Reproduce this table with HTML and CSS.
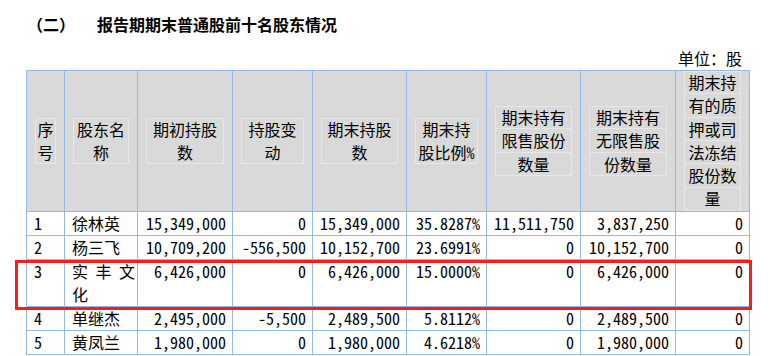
FILE: index.html
```html
<!DOCTYPE html>
<html lang="zh-CN">
<head>
<meta charset="utf-8">
<title>报告期期末普通股前十名股东情况</title>
<link rel="stylesheet" href="styles.css">
</head>
<body>
<div class="page">
  <h2 class="title"><span class="sec">（二）</span>报告期期末普通股前十名股东情况</h2>
  <div class="unit">单位：股</div>
  <table class="holders">
    <colgroup>
      <col class="w38"><col class="w73"><col class="w95"><col class="w80"><col class="w94"><col class="w80"><col class="w94"><col class="w95"><col class="w74">
    </colgroup>
    <thead>
      <tr>
        <th><div class="hb">序号</div></th>
        <th><div class="hb">股东名称</div></th>
        <th><div class="hb">期初持股数</div></th>
        <th><div class="hb">持股变动</div></th>
        <th><div class="hb">期末持股数</div></th>
        <th><div class="hb">期末持股比例%</div></th>
        <th><div class="hb lined">期末持有限售股份数量</div></th>
        <th><div class="hb lined">期末持有无限售股份数量</div></th>
        <th><div class="hb lined">期末持有的质押或司法冻结股份数量</div></th>
      </tr>
    </thead>
    <tbody>
      <tr>
        <td class="n l">1</td><td class="name">徐林英</td><td class="n">15,349,000</td><td class="n">0</td><td class="n">15,349,000</td><td class="n">35.8287%</td><td class="n">11,511,750</td><td class="n">3,837,250</td><td class="n">0</td>
      </tr>
      <tr>
        <td class="n l">2</td><td class="name">杨三飞</td><td class="n">10,709,200</td><td class="n">-556,500</td><td class="n">10,152,700</td><td class="n">23.6991%</td><td class="n">0</td><td class="n">10,152,700</td><td class="n">0</td>
      </tr>
      <tr>
        <td class="n l">3</td><td class="name just">实丰文化</td><td class="n">6,426,000</td><td class="n">0</td><td class="n">6,426,000</td><td class="n">15.0000%</td><td class="n">0</td><td class="n">6,426,000</td><td class="n">0</td>
      </tr>
      <tr>
        <td class="n l">4</td><td class="name">单继杰</td><td class="n">2,495,000</td><td class="n">-5,500</td><td class="n">2,489,500</td><td class="n">5.8112%</td><td class="n">0</td><td class="n">2,489,500</td><td class="n">0</td>
      </tr>
      <tr>
        <td class="n l">5</td><td class="name">黄凤兰</td><td class="n">1,980,000</td><td class="n">0</td><td class="n">1,980,000</td><td class="n">4.6218%</td><td class="n">0</td><td class="n">1,980,000</td><td class="n">0</td>
      </tr>
    </tbody>
  </table>
  <div class="mark"></div>
</div>
</body>
</html>
```
FILE: styles.css
```css
html, body {
  margin: 0;
  padding: 0;
  background: #ffffff;
}

body {
  font-family: "Noto Sans CJK SC", "Liberation Sans", sans-serif;
  font-size: 16px;
  color: #000;
}

.page {
  position: relative;
  padding-left: 26px;
  height: 356px;
  overflow: hidden;
}

.title {
  margin: 13px 0 0 1px;
  font-size: 16px;
  line-height: 23px;
  font-weight: 700;
}

.sec {
  display: inline-block;
  width: 70px;
}

.unit {
  margin-top: 11px;
  width: 723px;
  box-sizing: border-box;
  padding-right: 7px;
  text-align: right;
  line-height: 23px;
}

.holders {
  border-collapse: collapse;
  table-layout: fixed;
  width: 723px;
}

.w38 { width: 38px; }
.w73 { width: 73px; }
.w74 { width: 74px; }
.w80 { width: 80px; }
.w94 { width: 94px; }
.w95 { width: 95px; }

.holders th,
.holders td {
  border: 1px solid #95b9e2;
}

.holders th {
  background: #d9d9d9;
  padding: 0 8px;
  font-family: "Noto Sans Mono CJK SC", "Noto Sans CJK SC", sans-serif;
  font-weight: 500;
  line-height: 23.3px;
  text-align: center;
  vertical-align: middle;
}

.hb {
  box-shadow: inset 0 0 0 1px #e7e7e7;
}

.hb.lined {
  background: repeating-linear-gradient(to bottom, transparent 0, transparent 22.3px, #e7e7e7 22.3px, #e7e7e7 23.3px);
}

.holders td {
  padding: 0 6px 0 7px;
  line-height: 23px;
  vertical-align: top;
  white-space: nowrap;
}

.holders td.n {
  font-family: "Noto Sans Mono CJK SC", "Liberation Serif", "Noto Sans CJK SC", serif;
  text-align: right;
}

.holders td.l {
  text-align: left;
}

.holders td.name {
  padding-right: 2px;
  text-align: left;
}

.holders td.just {
  white-space: normal;
  text-align: justify;
}

.mark {
  position: absolute;
  left: 15px;
  top: 260px;
  width: 737px;
  height: 50px;
  box-sizing: border-box;
  border: 3px solid #fb1d1d;
}
```
